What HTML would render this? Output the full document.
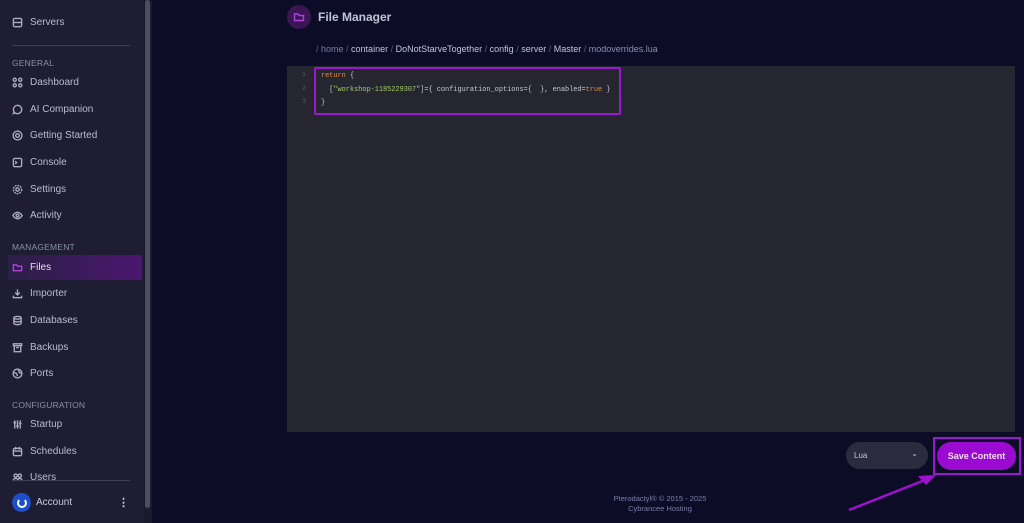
<!DOCTYPE html>
<html><head><meta charset="utf-8"><style>
*{box-sizing:border-box;margin:0;padding:0}
body{width:1024px;height:523px;overflow:hidden;background:#0d0c27;font-family:"Liberation Sans",sans-serif;position:relative}
.sb{position:absolute;left:0;top:0;width:144px;height:523px;background:#1e1d33;overflow:hidden}
.scroll{position:absolute;left:144px;top:0;width:8px;height:523px;background:#1a1a2c}
.scroll div{position:absolute;left:1px;top:0;width:5px;height:508px;background:#4a5060;border-radius:3px}
.it{position:absolute;left:12px;font-size:10px;color:#b8bcd0;display:flex;align-items:center;gap:7px}
.it svg{width:11px;height:11px;stroke:#a8acc0;fill:none;stroke-width:1.5}
.hd{position:absolute;left:12px;font-size:8.5px;color:#8a90a8;letter-spacing:.2px}
.files{position:absolute;left:8px;top:255px;width:134px;height:25px;background:linear-gradient(90deg,#2a1f45,#4b1670)}
.ed{position:absolute;left:287px;top:66px;width:728px;height:366px;background:#25262f}
.code{font-family:"Liberation Mono",monospace;font-size:6.9px;color:#c8c8d0}
.ln{position:absolute;left:302px;color:#555a66;font-family:"Liberation Mono",monospace;font-size:6.5px}
</style></head><body>
<div class="sb">
<div class="it" style="top:17px"><svg viewBox="0 0 12 12"><rect x="1.5" y="1.5" width="9" height="9" rx="1.5"/><path d="M1.5 6h9"/></svg>Servers</div>
<div style="position:absolute;left:12px;top:45px;width:118px;height:1px;background:#3c3f55"></div>
<div class="hd" style="top:58px">GENERAL</div>
<div class="it" style="top:77px"><svg viewBox="0 0 12 12"><circle cx="3" cy="3" r="1.7"/><circle cx="9" cy="3" r="1.7"/><circle cx="3" cy="9" r="1.7"/><circle cx="9" cy="9" r="1.7"/></svg>Dashboard</div>
<div class="it" style="top:104px"><svg viewBox="0 0 12 12"><path d="M6 1.5a4.5 4.5 0 1 1-2.5 8.2L1.5 10.5l.8-2A4.5 4.5 0 0 1 6 1.5z"/></svg>AI Companion</div>
<div class="it" style="top:130px"><svg viewBox="0 0 12 12"><circle cx="6" cy="6" r="4.8"/><circle cx="6" cy="6" r="2"/></svg>Getting Started</div>
<div class="it" style="top:157px"><svg viewBox="0 0 12 12"><rect x="1.5" y="1.5" width="9" height="9" rx="1.5"/><path d="M3.5 4.5l1.5 1.5-1.5 1.5"/></svg>Console</div>
<div class="it" style="top:184px"><svg viewBox="0 0 12 12"><circle cx="6" cy="6" r="4.5" stroke-dasharray="2 1"/><circle cx="6" cy="6" r="1.8"/></svg>Settings</div>
<div class="it" style="top:210px"><svg viewBox="0 0 12 12"><path d="M1 6s2-3.5 5-3.5S11 6 11 6 9 9.5 6 9.5 1 6 1 6z"/><circle cx="6" cy="6" r="1.5"/></svg>Activity</div>
<div class="hd" style="top:242px">MANAGEMENT</div>
<div class="files"></div>
<div class="it" style="top:262px;color:#e8e0f0"><svg viewBox="0 0 12 12" style="stroke:#b040e0"><path d="M1.5 3.5V9.5h9V4.5H6L5 3H1.5z"/></svg>Files</div>
<div class="it" style="top:288px"><svg viewBox="0 0 12 12"><path d="M6 1.5v6M3.5 5L6 7.5 8.5 5M1.5 8.5v2h9v-2"/></svg>Importer</div>
<div class="it" style="top:315px"><svg viewBox="0 0 12 12"><ellipse cx="6" cy="3" rx="4" ry="1.5"/><path d="M2 3v6c0 .8 1.8 1.5 4 1.5s4-.7 4-1.5V3M2 6c0 .8 1.8 1.5 4 1.5s4-.7 4-1.5"/></svg>Databases</div>
<div class="it" style="top:342px"><svg viewBox="0 0 12 12"><path d="M1.5 2h9v2h-9zM2.5 4v6.5h7V4M4.5 6h3"/></svg>Backups</div>
<div class="it" style="top:368px"><svg viewBox="0 0 12 12"><circle cx="6" cy="6" r="4.8"/><path d="M2 5l3 1 1 3M7 2l1 3 3 1"/></svg>Ports</div>
<div class="hd" style="top:400px">CONFIGURATION</div>
<div class="it" style="top:419px"><svg viewBox="0 0 12 12"><path d="M3 1.5v9M6 1.5v9M9 1.5v9M1.5 4h3M4.5 7.5h3M7.5 5h3"/></svg>Startup</div>
<div class="it" style="top:446px"><svg viewBox="0 0 12 12"><rect x="1.5" y="2.5" width="9" height="8" rx="1.5"/><path d="M4 1v3M8 1v3M1.5 5.5h9"/></svg>Schedules</div>
<div class="it" style="top:472px"><svg viewBox="0 0 12 12"><circle cx="4" cy="4" r="1.8"/><circle cx="8.5" cy="4" r="1.8"/><path d="M1 10c0-2 1.5-3 3-3s3 1 3 3M6 10c0-2 1.2-3 2.5-3S11 8 11 10"/></svg>Users</div>
<div style="position:absolute;left:0;top:483px;width:144px;height:40px;background:#1e1d33"></div>
<div style="position:absolute;left:12px;top:480px;width:118px;height:1px;background:#3c3f55"></div>
<div style="position:absolute;left:12px;top:493px;width:19px;height:19px;border-radius:50%;background:#1e4fc8;display:flex;align-items:center;justify-content:center"><div style="width:10px;height:10px;border:2px solid #fff;border-top-color:transparent;border-radius:50%"></div></div>
<div style="position:absolute;left:36px;top:497px;font-size:10px;color:#c8ccdc">Account</div>
<div style="position:absolute;left:118px;top:496px;font-size:11px;color:#c8ccdc;font-weight:bold">⋮</div>
</div>
<div class="scroll"><div></div></div>

<div style="position:absolute;left:287px;top:5px;width:24px;height:24px;border-radius:50%;background:#3a1655;display:flex;align-items:center;justify-content:center"><svg viewBox="0 0 12 12" width="12" height="12" style="stroke:#b040e0;fill:none;stroke-width:1.4"><path d="M1.5 3V9.5h9V4.5H6L5 3H1.5z"/></svg></div>
<div style="position:absolute;left:318px;top:10px;font-size:12px;color:#c0c4d8;font-weight:bold">File Manager</div>
<div style="position:absolute;left:316px;top:44px;font-size:9px;color:#5a5e7c">/ <span style="color:#7a7e9c">home</span> / <span style="color:#c0c4d8">container</span> / <span style="color:#c0c4d8">DoNotStarveTogether</span> / <span style="color:#c0c4d8">config</span> / <span style="color:#c0c4d8">server</span> / <span style="color:#c0c4d8">Master</span> / <span style="color:#8a8eb0">modoverrides.lua</span></div>

<div class="ed"></div>
<div class="ln" style="top:71px">1</div><div class="ln" style="top:85px">2</div><div class="ln" style="top:98px">3</div>
<div class="code" style="position:absolute;left:321px;top:70px;line-height:13.5px"><span style="color:#e09040">return</span> {<br>&nbsp;&nbsp;[<span style="color:#a0d060">"workshop-1185229307"</span>]={ configuration_options={&nbsp;&nbsp;}, enabled=<span style="color:#e09040">true</span> }<br>}</div>
<div style="position:absolute;left:314px;top:67px;width:307px;height:48px;border:2px solid #9a18d0;border-radius:2px"></div>

<div style="position:absolute;left:846px;top:442px;width:82px;height:27px;border-radius:14px;background:#2b2b3f;color:#c0c4d8;font-size:8px;padding:9px 0 0 8px">Lua<span style="position:absolute;right:10px;top:7px;font-size:8px">⌄</span></div>
<div style="position:absolute;left:933px;top:437px;width:88px;height:38px;border:2px solid #9a18d0"></div>
<div style="position:absolute;left:937px;top:442px;width:79px;height:28px;border-radius:14px;background:#9a0ad0;color:#f0e0f8;font-size:9px;font-weight:bold;text-align:center;line-height:28px">Save Content</div>
<svg style="position:absolute;left:840px;top:470px" width="100" height="45"><path d="M9 40L90 8" stroke="#a010d0" stroke-width="2.5"/><path d="M96 5L78 6L86 15z" fill="#a010d0"/></svg>

<div style="position:absolute;left:560px;top:494px;width:200px;text-align:center;font-size:7.5px;color:#7a7ea8;line-height:10px">Pterodactyl® © 2015 - 2025<br>Cybrancee Hosting</div>
</body></html>
